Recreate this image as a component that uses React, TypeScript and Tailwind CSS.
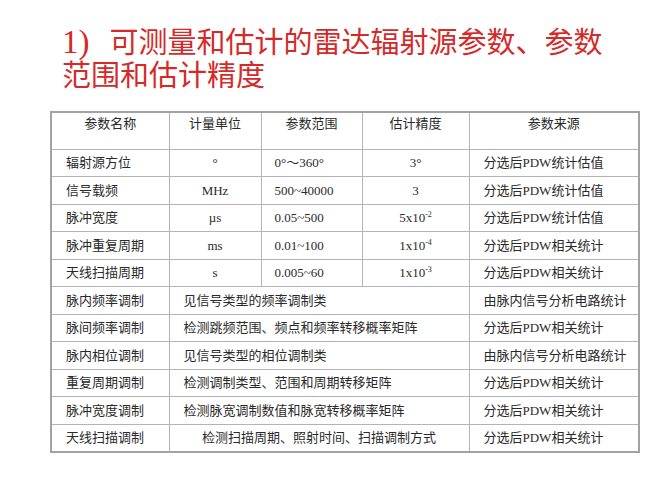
import React from "react";

type Row = {
    name: string;
    unit?: string;
    range?: string;
    accuracy?: React.ReactNode;
    merged?: string;
    centerMerged?: boolean;
    source: string;
};

const sci = (base: string, exp: string) => (
    <>
        {base}
        <sup className="text-[8px] align-baseline relative -top-[5px]">{exp}</sup>
    </>
);

const rows: Row[] = [
    { name: "辐射源方位", unit: "°", range: "0°～360°", accuracy: "3°", source: "分选后PDW统计估值" },
    { name: "信号载频", unit: "MHz", range: "500~40000", accuracy: "3", source: "分选后PDW统计估值" },
    { name: "脉冲宽度", unit: "µs", range: "0.05~500", accuracy: sci("5x10", "-2"), source: "分选后PDW统计估值" },
    { name: "脉冲重复周期", unit: "ms", range: "0.01~100", accuracy: sci("1x10", "-4"), source: "分选后PDW相关统计" },
    { name: "天线扫描周期", unit: "s", range: "0.005~60", accuracy: sci("1x10", "-3"), source: "分选后PDW相关统计" },
    { name: "脉内频率调制", merged: "见信号类型的频率调制类", source: "由脉内信号分析电路统计" },
    { name: "脉间频率调制", merged: "检测跳频范围、频点和频率转移概率矩阵", source: "分选后PDW相关统计" },
    { name: "脉内相位调制", merged: "见信号类型的相位调制类", source: "由脉内信号分析电路统计" },
    { name: "重复周期调制", merged: "检测调制类型、范围和周期转移矩阵", source: "分选后PDW相关统计" },
    { name: "脉冲宽度调制", merged: "检测脉宽调制数值和脉宽转移概率矩阵", source: "分选后PDW相关统计" },
    { name: "天线扫描调制", merged: "检测扫描周期、照射时间、扫描调制方式", centerMerged: true, source: "分选后PDW相关统计" },
];

const cell = "border border-[#b4b4b4] h-[27.5px] p-0 align-middle";

export default function App() {
    return (
        <div
            className="w-[667px] h-[500px] bg-white overflow-hidden"
            style={{ fontFamily: '"Liberation Serif", "Noto Sans CJK SC", serif' }}
        >
            <h1 className="pt-[26px] pl-[62px] text-[29px] leading-[33px] text-[#d42a2a] font-normal">
                <span className="text-[33px] mr-[20px]">1)</span>可测量和估计的雷达辐射源参数、参数
                <br />
                范围和估计精度
            </h1>

            <table className="ml-[50px] mt-[18px] w-[588px] border-collapse border-2 border-[#a2a2a2] text-[13px] text-[#2a2a2a] table-fixed">
                <colgroup>
                    <col className="w-[118px]" />
                    <col className="w-[92px]" />
                    <col className="w-[101px]" />
                    <col className="w-[107px]" />
                    <col className="w-[170px]" />
                </colgroup>
                <thead>
                    <tr>
                        {["参数名称", "计量单位", "参数范围", "估计精度", "参数来源"].map((h) => (
                            <th
                                key={h}
                                className="border border-[#b4b4b4] h-[37px] font-normal align-top pt-[1px] text-center"
                            >
                                {h}
                            </th>
                        ))}
                    </tr>
                </thead>
                <tbody>
                    {rows.map((r) => (
                        <tr key={r.name}>
                            <td className={cell + " pl-[14px]"}>{r.name}</td>
                            {r.merged ? (
                                <td
                                    colSpan={3}
                                    className={cell + (r.centerMerged ? " text-center" : " pl-[14px]")}
                                >
                                    {r.merged}
                                </td>
                            ) : (
                                <>
                                    <td className={cell + " text-center"}>{r.unit}</td>
                                    <td className={cell + " pl-[13px]"}>{r.range}</td>
                                    <td className={cell + " text-center"}>{r.accuracy}</td>
                                </>
                            )}
                            <td className={cell + " pl-[14px]"}>{r.source}</td>
                        </tr>
                    ))}
                </tbody>
            </table>
        </div>
    );
}
